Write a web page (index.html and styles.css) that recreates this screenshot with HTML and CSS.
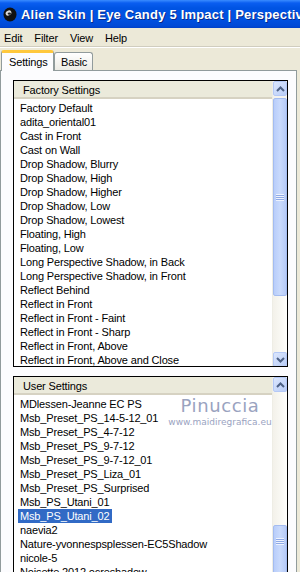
FILE: index.html
```html
<!DOCTYPE html>
<html lang="en">

<head>
    <meta charset="UTF-8">
    <meta name="viewport" content="width=device-width, initial-scale=1.0">
    <title>Alien Skin | Eye Candy 5 Impact | Perspective Shadow</title>
    <link rel="stylesheet" href="styles.css">
</head>

<body>
    <div class="window">
        <div class="titleBar">
            <svg class="appIcon" width="16" height="16" viewBox="0 0 16 16">
                <ellipse cx="8" cy="8.5" rx="6.5" ry="7" fill="#111"/>
                <ellipse cx="6.5" cy="7" rx="3" ry="2.4" fill="#d8d8d8" transform="rotate(-30 6.5 7)"/>
                <ellipse cx="7.4" cy="7.6" rx="1.6" ry="1.2" fill="#222"/>
            </svg>
            <span class="title">Alien Skin | Eye Candy 5 Impact | Perspective Shadow</span>
        </div>

        <div class="menuBar">
            <span>Edit</span>
            <span>Filter</span>
            <span>View</span>
            <span>Help</span>
        </div>

        <div class="tabs">
            <div class="tab active">Settings</div>
            <div class="tab">Basic</div>
        </div>

        <div class="panel">
            <div class="listbox factory">
                <div class="listMain">
                    <div class="listHead">Factory Settings</div>
                    <ul class="items">
                        <li>Factory Default</li>
                        <li>adita_oriental01</li>
                        <li>Cast in Front</li>
                        <li>Cast on Wall</li>
                        <li>Drop Shadow, Blurry</li>
                        <li>Drop Shadow, High</li>
                        <li>Drop Shadow, Higher</li>
                        <li>Drop Shadow, Low</li>
                        <li>Drop Shadow, Lowest</li>
                        <li>Floating, High</li>
                        <li>Floating, Low</li>
                        <li>Long Perspective Shadow, in Back</li>
                        <li>Long Perspective Shadow, in Front</li>
                        <li>Reflect Behind</li>
                        <li>Reflect in Front</li>
                        <li>Reflect in Front - Faint</li>
                        <li>Reflect in Front - Sharp</li>
                        <li>Reflect in Front, Above</li>
                        <li>Reflect in Front, Above and Close</li>
                    </ul>
                </div>
                <div class="scrollBar">
                    <div class="sbBtn up"><svg width="9" height="6" viewBox="0 0 9 6"><path d="M1 5 L4.5 1.5 L8 5" fill="none" stroke="#4d6185" stroke-width="2"/></svg></div>
                    <div class="thumb factoryThumb"><span class="grip"></span></div>
                    <div class="track"></div>
                    <div class="sbBtn down"><svg width="9" height="6" viewBox="0 0 9 6"><path d="M1 1 L4.5 4.5 L8 1" fill="none" stroke="#4d6185" stroke-width="2"/></svg></div>
                </div>
            </div>

            <div class="listbox user">
                <div class="listMain">
                    <div class="listHead">User Settings</div>
                    <ul class="items">
                        <li>MDlessen-Jeanne EC PS</li>
                        <li>Msb_Preset_PS_14-5-12_01</li>
                        <li>Msb_Preset_PS_4-7-12</li>
                        <li>Msb_Preset_PS_9-7-12</li>
                        <li>Msb_Preset_PS_9-7-12_01</li>
                        <li>Msb_Preset_PS_Liza_01</li>
                        <li>Msb_Preset_PS_Surprised</li>
                        <li>Msb_PS_Utani_01</li>
                        <li><span class="selected">Msb_PS_Utani_02</span></li>
                        <li>naevia2</li>
                        <li>Nature-yvonnespsplessen-EC5Shadow</li>
                        <li>nicole-5</li>
                        <li>Noisette 2012 ocreshadow</li>
                    </ul>
                </div>
                <div class="scrollBar">
                    <div class="sbBtn up"><svg width="9" height="6" viewBox="0 0 9 6"><path d="M1 5 L4.5 1.5 L8 5" fill="none" stroke="#4d6185" stroke-width="2"/></svg></div>
                    <div class="track userTrack"></div>
                    <div class="thumb userThumb"><span class="grip"></span></div>
                </div>
                <div class="watermark">
                    <span class="wmName">Pinuccia</span>
                    <span class="wmUrl">www.maidiregrafica.eu</span>
                </div>
            </div>
        </div>
    </div>
</body>

</html>
```

FILE: styles.css
```css
* {
    margin: 0;
    padding: 0;
    box-sizing: border-box;
}

body {
    width: 300px;
    height: 572px;
    overflow: hidden;
    background: #ece9d8;
    font-family: "Liberation Sans", Arial, sans-serif;
    font-size: 11px;
    letter-spacing: -0.15px;
    color: #000;
}

.window {
    display: flex;
    flex-direction: column;
    height: 572px;
}

.titleBar {
    flex: none;
    height: 28px;
    display: flex;
    align-items: center;
    gap: 3px;
    padding-left: 2px;
    white-space: nowrap;
    overflow: hidden;
    background: linear-gradient(#3a8cff 0, #0a5ef0 3px, #0054e3 8px, #0050e0 20px, #0049d6 26px, #0040c8 28px);
}

.appIcon {
    flex: none;
}

.title {
    color: #fff;
    font-weight: bold;
    font-size: 13px;
    letter-spacing: 0.2px;
    text-shadow: 1px 1px 0 #0a2a8a;
}

.menuBar {
    flex: none;
    height: 20px;
    display: flex;
    align-items: center;
    gap: 12px;
    padding-left: 4px;
    border-bottom: 1px solid #fff;
    box-shadow: 0 -1px 0 #d0cdbf inset;
}

.tabs {
    flex: none;
    display: flex;
    align-items: flex-end;
    height: 22px;
    padding-left: 1px;
}

.tab {
    height: 18px;
    padding: 3px 5px 0 6px;
    background: linear-gradient(#fff, #ecebe5);
    border: 1px solid #919b9c;
    border-bottom: none;
    border-radius: 3px 3px 0 0;
}

.tab.active {
    height: 21px;
    width: 53px;
    padding: 3px 0 0 7px;
    background: #fcfcfe;
    border-top: 3px solid #ffc83c;
    position: relative;
    top: 1px;
    z-index: 1;
}

.panel {
    flex: 1;
    min-height: 0;
    overflow: hidden;
    background: #fcfcfe;
    border: 1px solid #919b9c;
    border-bottom: none;
    margin-right: 3px;
    padding: 9px 8px 0 12px;
    display: flex;
    flex-direction: column;
    gap: 9px;
}

.listbox {
    border: 1px solid #000;
    background: #fff;
    display: grid;
    grid-template-columns: 1fr 15px;
    overflow: hidden;
    position: relative;
}

.factory {
    flex: none;
    height: 287px;
}

.user {
    flex: 1;
    min-height: 0;
    border-bottom: none;
}

.listMain {
    display: flex;
    flex-direction: column;
    min-width: 0;
}

.listHead {
    flex: none;
    height: 18px;
    line-height: 18px;
    padding-left: 9px;
    background: #ebeadb;
    border-bottom: 2px solid #d6d2c2;
}

.items {
    list-style: none;
    padding: 2px 0 0 4px;
    white-space: nowrap;
}

.items li {
    height: 14px;
    line-height: 14px;
    padding-left: 2px;
}

.selected {
    display: inline-block;
    margin-left: -2px;
    padding: 0 3px 0 2px;
    background: #316ac5;
    color: #fff;
}

.scrollBar {
    display: flex;
    flex-direction: column;
    min-height: 0;
    background: #f4f3ee;
    border-left: 1px solid #eeede5;
}

.sbBtn {
    height: 15px;
    flex: none;
    display: flex;
    align-items: center;
    justify-content: center;
    background: linear-gradient(135deg, #dbe6fd, #b9cdf7);
    border: 1px solid #b4c8f6;
    border-radius: 2px;
}

.thumb {
    background: linear-gradient(90deg, #b8cdfa, #c9dafc 50%, #b7cbf7);
    border: 1px solid #a4bcf0;
    border-radius: 2px;
    display: flex;
    align-items: center;
    justify-content: center;
}

.factoryThumb {
    height: 198px;
    margin-top: 2px;
    flex: none;
}

.track {
    flex: 1;
    background: linear-gradient(90deg, #f3f1ea, #fefefb);
}

.userTrack {
    flex: none;
    height: 133px;
}

.userThumb {
    flex: 1;
    align-items: flex-start;
    padding-top: 12px;
}

.grip {
    width: 8px;
    height: 7px;
    background: repeating-linear-gradient(#eef3fe 0, #eef3fe 1px, #8faae6 1px, #8faae6 2px);
}

.watermark {
    position: absolute;
    left: 153px;
    top: 18px;
    width: 106px;
    display: flex;
    flex-direction: column;
    align-items: center;
    color: #9aa3bf;
    letter-spacing: 0;
    pointer-events: none;
}

.wmName {
    font-family: "DejaVu Sans", sans-serif;
    font-size: 18px;
    letter-spacing: 0.6px;
    line-height: 22px;
}

.wmUrl {
    font-family: "DejaVu Sans", sans-serif;
    font-size: 9px;
    line-height: 11px;
    white-space: nowrap;
}
```
